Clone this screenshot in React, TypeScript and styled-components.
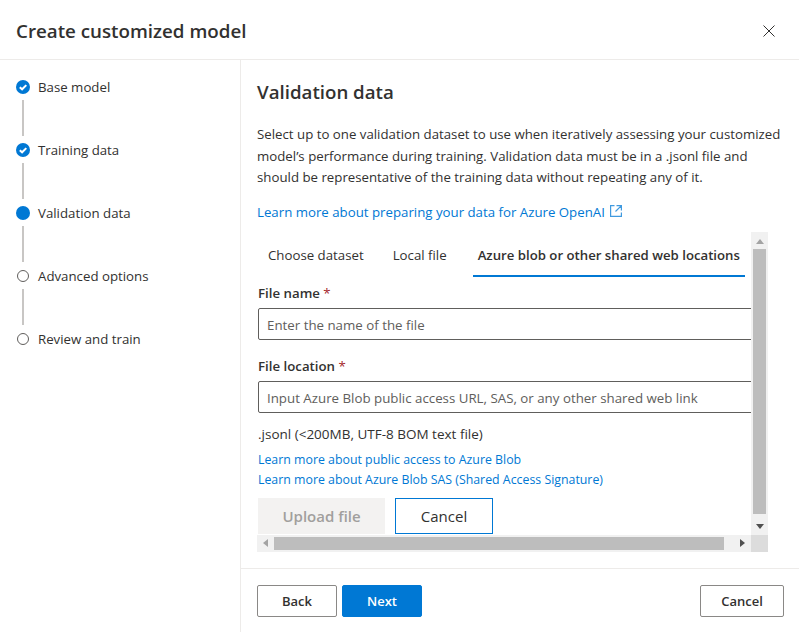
import styled, { createGlobalStyle } from 'styled-components';

const steps = [
  { name: 'Base model', state: 'done' },
  { name: 'Training data', state: 'done' },
  { name: 'Validation data', state: 'current' },
  { name: 'Advanced options', state: 'todo' },
  { name: 'Review and train', state: 'todo' },
];

const GlobalStyle = createGlobalStyle`
  * {
    box-sizing: border-box;
  }
  html, body {
    margin: 0;
    padding: 0;
    background: #fff;
  }
  body {
    font-family: 'Open Sans', 'Noto Sans', sans-serif;
    font-size: 13.25px;
    color: #323130;
  }
`;

const StepIcon = ({ state }: { state: string }) => {
  if (state === 'done') {
    return (
      <svg width="14" height="14" viewBox="0 0 14 14">
        <circle cx="7" cy="7" r="7" fill="#0078d4" />
        <path d="M3.8 7.2 L6.1 9.3 L10.3 5.1" fill="none" stroke="#fff" strokeWidth="2" />
      </svg>
    );
  }
  if (state === 'current') {
    return (
      <svg width="14" height="14" viewBox="0 0 14 14">
        <circle cx="7" cy="7" r="7" fill="#0078d4" />
      </svg>
    );
  }
  return (
    <svg width="14" height="14" viewBox="0 0 14 14">
      <circle cx="7" cy="7" r="5.5" fill="#fff" stroke="#605e5c" strokeWidth="1" />
    </svg>
  );
};

const Arrow = ({ dir, color }: { dir: 'up' | 'down' | 'left' | 'right'; color: string }) => {
  const points = {
    up: '0,6 4,1 8,6',
    down: '0,2 4,7 8,2',
    left: '6,0 1,4 6,8',
    right: '2,0 7,4 2,8',
  };
  return (
    <svg width="8" height="8" viewBox="0 0 8 8">
      <polygon points={points[dir]} fill={color} />
    </svg>
  );
};

const App = () => {
  return (
    <>
      <GlobalStyle />
      <Dialog>
        <Header>
          <Title>Create customized model</Title>
          <CloseButton>
            <svg width="12" height="12" viewBox="0 0 12 12">
              <path d="M0.5 0.5 L11.5 11.5 M11.5 0.5 L0.5 11.5" stroke="#323130" strokeWidth="1" fill="none" />
            </svg>
          </CloseButton>
        </Header>
        <Body>
          <Sidebar>
            {steps.map((step, i) => (
              <Step key={step.name}>
                <StepRow>
                  <StepIconBox>
                    <StepIcon state={step.state} />
                  </StepIconBox>
                  <StepName>{step.name}</StepName>
                </StepRow>
                {i < steps.length - 1 && <Connector />}
              </Step>
            ))}
          </Sidebar>
          <Main>
            <Content>
              <Heading>Validation data</Heading>
              <Description>
                Select up to one validation dataset to use when iteratively assessing your customized model’s
                performance during training. Validation data must be in a .jsonl file and should be representative
                of the training data without repeating any of it.
              </Description>
              <LearnLink>
                Learn more about preparing your data for Azure OpenAI
                <svg width="12" height="12" viewBox="0 0 12 12">
                  <path
                    d="M4.5 0.6 H0.6 V11.4 H11.4 V7.5 M6.5 0.6 H11.4 V5.5 M11.4 0.6 L5.5 6.5"
                    fill="none"
                    stroke="#0078d4"
                    strokeWidth="1.2"
                    opacity="0.75"
                  />
                </svg>
              </LearnLink>
              <ScrollFrame>
                <Viewport>
                  <Tabs>
                    <Tab>Choose dataset</Tab>
                    <Tab>Local file</Tab>
                    <Tab $active>Azure blob or other shared web locations</Tab>
                  </Tabs>
                  <Field>
                    <FieldLabel>
                      File name <Required>*</Required>
                    </FieldLabel>
                    <Input placeholder="Enter the name of the file" />
                  </Field>
                  <Field>
                    <FieldLabel>
                      File location <Required>*</Required>
                    </FieldLabel>
                    <Input placeholder="Input Azure Blob public access URL, SAS, or any other shared web link" />
                  </Field>
                  <Hint>.jsonl (&lt;200MB, UTF-8 BOM text file)</Hint>
                  <SmallLink>Learn more about public access to Azure Blob</SmallLink>
                  <SmallLink>Learn more about Azure Blob SAS (Shared Access Signature)</SmallLink>
                  <UploadActions>
                    <UploadButton disabled>Upload file</UploadButton>
                    <OutlineCancel>Cancel</OutlineCancel>
                  </UploadActions>
                </Viewport>
                <VerticalBar>
                  <Arrow dir="up" color="#a3a3a3" />
                  <VerticalThumb />
                  <Arrow dir="down" color="#505050" />
                </VerticalBar>
                <HorizontalBar>
                  <Arrow dir="left" color="#a3a3a3" />
                  <HorizontalThumb />
                  <Arrow dir="right" color="#505050" />
                </HorizontalBar>
                <Corner />
              </ScrollFrame>
            </Content>
            <Footer>
              <FooterGroup>
                <Button>Back</Button>
                <PrimaryButton>Next</PrimaryButton>
              </FooterGroup>
              <FooterCancel>Cancel</FooterCancel>
            </Footer>
          </Main>
        </Body>
      </Dialog>
    </>
  );
};

const Dialog = styled.div`
  width: 799px;
  height: 632px;
  display: flex;
  flex-direction: column;
  background: #fff;
  overflow: hidden;
`;
const Header = styled.div`
  height: 60px;
  flex: none;
  display: flex;
  align-items: center;
  justify-content: space-between;
  padding: 2px 24px 0 16px;
  border-bottom: 1px solid #edebe9;
`;
const Title = styled.h1`
  margin: 0;
  font-size: 18.75px;
  font-weight: 600;
  color: #323130;
`;
const CloseButton = styled.div`
  display: flex;
  width: 12px;
  height: 12px;
`;
const Body = styled.div`
  flex: 1;
  display: flex;
  min-height: 0;
`;
const Sidebar = styled.nav`
  width: 241px;
  flex: none;
  border-right: 1px solid #edebe9;
  padding: 17px 0 0 16px;
`;
const Step = styled.div`
  display: flex;
  flex-direction: column;
`;
const StepRow = styled.div`
  display: flex;
  align-items: center;
  height: 20px;
  gap: 8px;
`;
const StepIconBox = styled.div`
  display: flex;
  width: 14px;
  height: 14px;
`;
const StepName = styled.span`
  color: #323130;
`;
const Connector = styled.div`
  width: 2px;
  height: 36px;
  margin: 3px 0 4px 6px;
  background: #c8c6c4;
`;
const Main = styled.div`
  flex: 1;
  min-width: 0;
  display: flex;
  flex-direction: column;
`;
const Content = styled.div`
  flex: 1;
  min-height: 0;
  padding: 18px 16px 0;
  display: flex;
  flex-direction: column;
`;
const Heading = styled.h2`
  margin: 0 0 18px;
  height: 28px;
  font-size: 18.7px;
  line-height: 28px;
  font-weight: 600;
  color: #323130;
`;
const Description = styled.p`
  margin: 0 0 13px;
  line-height: 21.5px;
  color: #323130;
`;
const LearnLink = styled.a`
  display: flex;
  align-items: center;
  gap: 5px;
  height: 20px;
  color: #0078d4;
  svg {
    margin-top: -2px;
  }
`;
const ScrollFrame = styled.div`
  margin-top: 10px;
  width: 511px;
  height: 320px;
  display: grid;
  grid-template-columns: 494px 17px;
  grid-template-rows: 303px 17px;
`;
const Viewport = styled.div`
  overflow: hidden;
  padding-left: 1px;
  display: flex;
  flex-direction: column;
`;
const Tabs = styled.div`
  display: flex;
  gap: 19px;
  height: 45px;
  padding-left: 5px;
  flex: none;
`;
const Tab = styled.div<{ $active?: boolean }>`
  padding: 13px 5px 0;
  line-height: 20px;
  white-space: nowrap;
  font-size: ${(p) => (p.$active ? '13.2px' : 'inherit')};
  font-weight: ${(p) => (p.$active ? 600 : 400)};
  margin-left: ${(p) => (p.$active ? '2px' : '0')};
  border-bottom: 2px solid ${(p) => (p.$active ? '#0078d4' : 'transparent')};
`;
const Field = styled.div`
  flex: none;
  padding-top: 6px;
  & + & {
    margin-top: 10px;
  }
`;
const FieldLabel = styled.div`
  height: 25px;
  line-height: 20px;
  font-weight: 600;
`;
const Required = styled.span`
  color: #a4262c;
  font-weight: 400;
`;
const Input = styled.input`
  display: block;
  width: 540px;
  height: 32px;
  padding: 2px 8px 0;
  border: 1px solid #605e5c;
  border-radius: 2px;
  font-family: inherit;
  font-size: 13.3px;
  outline: none;
  &::placeholder {
    color: #605e5c;
    opacity: 1;
  }
`;
const Hint = styled.div`
  flex: none;
  font-size: 13.5px;
  line-height: 20px;
  margin: 11px 0 6px;
`;
const SmallLink = styled.a`
  flex: none;
  font-size: 12.35px;
  line-height: 20px;
  color: #0078d4;
  white-space: nowrap;
`;
const UploadActions = styled.div`
  flex: none;
  display: flex;
  gap: 10px;
  margin-top: 8px;
`;
const UploadButton = styled.button`
  width: 127px;
  height: 36px;
  border: none;
  background: #f3f2f1;
  color: #a19f9d;
  font-family: inherit;
  font-size: 15px;
  font-weight: 600;
`;
const OutlineCancel = styled.button`
  width: 98px;
  height: 36px;
  border: 1px solid #0078d4;
  background: #fff;
  color: #323130;
  font-family: inherit;
  font-size: 15px;
  font-weight: 500;
`;
const VerticalBar = styled.div`
  background: #f1f1f1;
  display: flex;
  flex-direction: column;
  align-items: center;
  padding-top: 6px;
`;
const VerticalThumb = styled.div`
  width: 13px;
  height: 265px;
  margin: 3px 0 8px;
  background: #bdbdbd;
`;
const HorizontalBar = styled.div`
  background: #f1f1f1;
  display: flex;
  align-items: center;
  padding: 0 5px;
`;
const HorizontalThumb = styled.div`
  width: 450px;
  height: 13px;
  margin: 0 auto 0 4px;
  background: #bdbdbd;
`;
const Corner = styled.div`
  background: #dcdcdc;
`;
const Footer = styled.div`
  flex: none;
  height: 64px;
  border-top: 1px solid #edebe9;
  padding: 16px 15px 0 16px;
  display: flex;
  justify-content: space-between;
  align-items: flex-start;
`;
const FooterGroup = styled.div`
  display: flex;
  gap: 5px;
`;
const Button = styled.button`
  width: 80px;
  height: 32px;
  border: 1px solid #8a8886;
  border-radius: 2px;
  background: #fff;
  color: #323130;
  font-family: inherit;
  font-size: 13px;
  font-weight: 600;
`;
const PrimaryButton = styled(Button)`
  background: #0078d4;
  border-color: #0078d4;
  color: #fff;
`;
const FooterCancel = styled(Button)`
  width: 84px;
`;

export default App;
